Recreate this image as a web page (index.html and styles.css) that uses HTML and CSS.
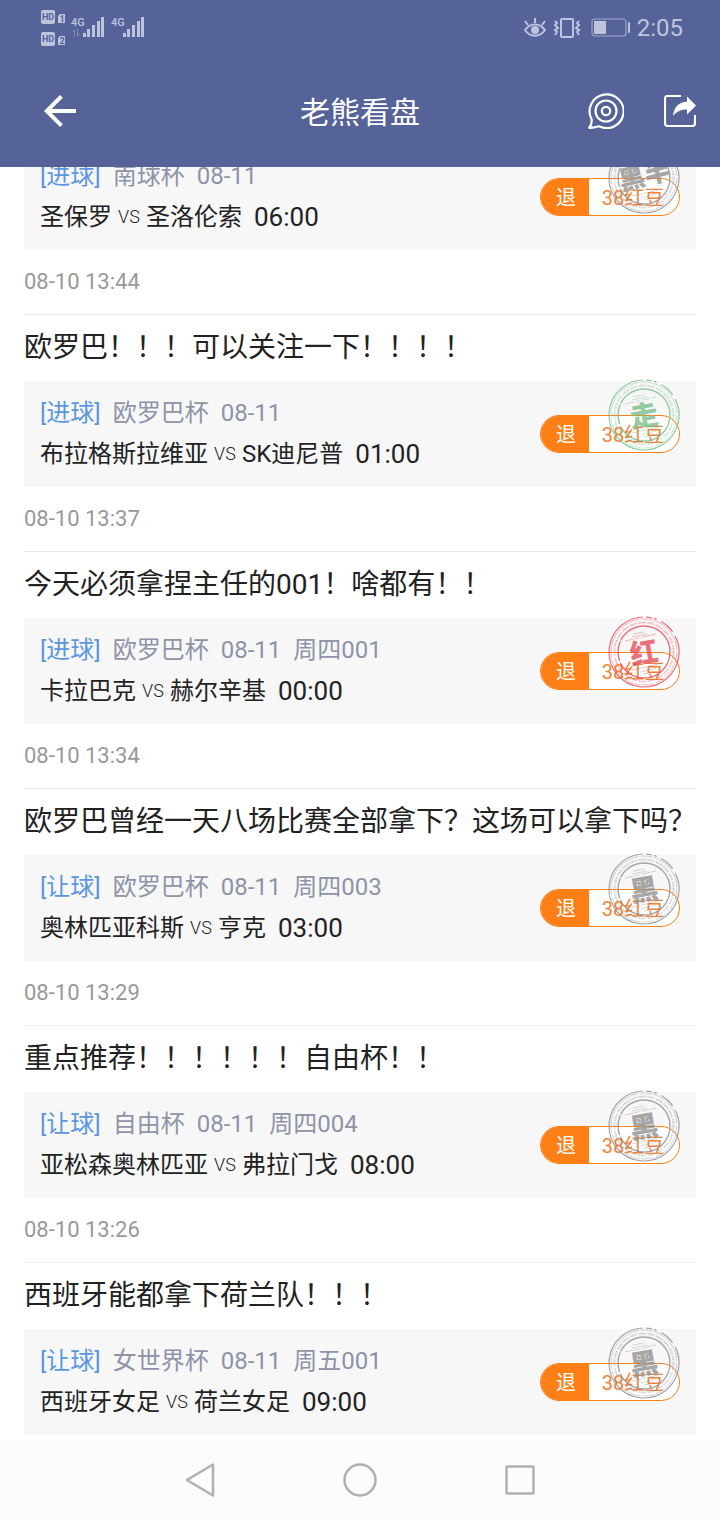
FILE: index.html
```html
<!DOCTYPE html>
<html lang="zh-CN">
<head>
  <meta charset="UTF-8" />
  <meta name="viewport" content="width=device-width, initial-scale=1.0" />
  <title>老熊看盘</title>
  <link rel="stylesheet" href="styles.css">
</head>
<body>

  <!-- Shared stamp ring -->
  <svg class="sprite" width="0" height="0" aria-hidden="true">
    <symbol id="ring" viewBox="0 0 72 72">
      <g fill="none" stroke="currentColor">
        <circle cx="36" cy="36" r="35" stroke-width="1.2" stroke-dasharray="3 5 30 0 150 3 6 2" transform="rotate(-40 36 36)"/>
        <circle cx="36" cy="36" r="33" stroke-width="0.5" stroke-dasharray="40 2 12 1"/>
        <circle cx="36" cy="36" r="29.5" stroke-width="1.8" stroke-dasharray="1 0.6 0.7 0.5 1.2 0.8 0.6 0.5 1 2" opacity="0.6"/>
        <circle cx="36" cy="36" r="26" stroke-width="1.4" stroke-dasharray="70 2 20 1"/>
        <path d="M17 25L48 18M24 54L55 47" stroke-width="0.5" stroke-dasharray="9 1 5 2"/>
        <path d="M25 18L36 16M24 21L39 18M33 56L48 52M36 58L46 56" stroke-width="1" stroke-dasharray="1 0.6 2 0.6" opacity="0.6"/>
      </g>
    </symbol>
  </svg>

  <header>
    <!-- Status bar -->
    <div class="status-bar">
      <svg class="signals" width="106" height="40" viewBox="0 0 106 40" fill="currentColor">
        <rect x="1" y="2" width="14" height="14" rx="2"/>
        <rect x="1" y="24" width="14" height="14" rx="2"/>
        <path d="M20 6h5v9h-7V8zM20 28h5v9h-7v-7z"/>
        <g class="badge-text" text-anchor="middle">
          <text x="8" y="12">HD</text>
          <text x="8" y="34">HD</text>
          <text x="22" y="14">1</text>
          <text x="22" y="36">2</text>
        </g>
        <g class="net-text">
          <text x="31" y="18">4G</text>
          <text x="71" y="18">4G</text>
        </g>
        <path opacity="0.4" d="M32 24l3-3v8h-1v-5zM37 21h1v5h2l-3 3z"/>
        <path d="M43 25h3v4h-3zM47 21h3v8h-3zM52 17h3v12h-3zM57 13h3v16h-3zM61 9h3v20h-3z"/>
        <path d="M83 25h3v4h-3zM87 21h3v8h-3zM92 17h3v12h-3zM97 13h3v16h-3zM101 9h3v20h-3z"/>
      </svg>
      <div class="status-right">
        <svg width="24" height="22" viewBox="0 0 24 22" fill="none" stroke="currentColor" stroke-width="2">
          <path d="M2 13C7 5.500 17 5.500 22 13C17 20.500 7 20.500 2 13zM12 6V1M5 8L2 4M19 8l3-4"/>
          <circle cx="12" cy="13" r="4" fill="currentColor" stroke="none"/>
        </svg>
        <svg width="28" height="22" viewBox="0 0 28 22" fill="none" stroke="currentColor" stroke-width="2">
          <rect x="8" y="2" width="12" height="18" rx="1"/>
          <path d="M2 4l2 2-2 2 3 3-3 2 2 2-2 3M26 4l-2 2 2 2-3 3 3 2-2 2 2 3"/>
        </svg>
        <svg class="battery" width="40" height="20" viewBox="0 0 40 20" fill="currentColor">
          <rect x="1" y="1" width="34" height="17" rx="3" fill="none" stroke="currentColor" stroke-width="1.200" opacity="0.7"/>
          <rect x="3" y="3" width="12" height="13"/>
          <rect x="37" y="4" width="2" height="11" rx="1"/>
        </svg>
        <span class="clock">2:05</span>
      </div>
    </div>

    <!-- App bar -->
    <div class="app-bar">
      <button class="icon-btn back-btn" aria-label="返回">
        <svg width="32" height="32" viewBox="4 4 16 16" fill="currentColor"><path d="M20 11H7.830l5.590-5.590L12 4l-8 8 8 8 1.410-1.410L7.830 13H20v-2z"/></svg>
      </button>
      <h1>老熊看盘</h1>
      <div class="actions">
        <button class="icon-btn" aria-label="消息">
          <svg width="36" height="36" viewBox="0 0 36 36" fill="none" stroke="currentColor" stroke-width="2.200">
            <path d="M3.500 26A17 16.800 0 1 1 11 33.300C7 34.500 4 35 1.200 34.800C3 32.500 4.300 30 3.500 26z" stroke-linejoin="round"/>
            <circle cx="18" cy="18" r="10.500"/>
            <circle cx="18" cy="18" r="4.200"/>
          </svg>
        </button>
        <button class="icon-btn" aria-label="分享">
          <svg width="32" height="32" viewBox="1 1 32 32" fill="none" stroke="currentColor" stroke-width="2.200">
            <path d="M18 2H4.500A2.500 2.500 0 0 0 2 4.500v25A2.500 2.500 0 0 0 4.500 32h25a2.500 2.500 0 0 0 2.500-2.500V21"/>
            <path d="M24 2.500L33 11.500L24 20.500V15.500C18 15.500 14 17 10 22C11 13 16 8 24 7.500z" fill="currentColor" stroke="none"/>
          </svg>
        </button>
      </div>
    </div>
  </header>

  <!-- Feed, scrolled part way down -->
  <main>
    <article class="post">
      <div class="card">
        <p class="league"><a href="#">[进球]</a><span>南球杯</span><span>08-11</span></p>
        <p class="match"><span>圣保罗</span><span class="vs">VS</span><span>圣洛伦索</span><time>06:00</time></p>
        <button class="price"><span class="refund">退</span><span class="beans">38红豆</span></button>
        <svg class="stamp gray half" viewBox="0 0 72 72"><use href="#ring"/><text x="37" y="43" text-anchor="middle" transform="rotate(-14 36 36)">黑半</text></svg>
      </div>
      <p class="posted">08-10 13:44</p>
    </article>

    <article class="post">
      <h2>欧罗巴！！！可以关注一下！！！！</h2>
      <div class="card">
        <p class="league"><a href="#">[进球]</a><span>欧罗巴杯</span><span>08-11</span></p>
        <p class="match"><span>布拉格斯拉维亚</span><span class="vs">VS</span><span>SK迪尼普</span><time>01:00</time></p>
        <button class="price"><span class="refund">退</span><span class="beans">38红豆</span></button>
        <svg class="stamp green" viewBox="0 0 72 72"><use href="#ring"/><text x="36" y="47" text-anchor="middle" transform="rotate(-10 36 36)">走</text></svg>
      </div>
      <p class="posted">08-10 13:37</p>
    </article>

    <article class="post">
      <h2>今天必须拿捏主任的001！啥都有！！</h2>
      <div class="card">
        <p class="league"><a href="#">[进球]</a><span>欧罗巴杯</span><span>08-11</span><span>周四001</span></p>
        <p class="match"><span>卡拉巴克</span><span class="vs">VS</span><span>赫尔辛基</span><time>00:00</time></p>
        <button class="price"><span class="refund">退</span><span class="beans">38红豆</span></button>
        <svg class="stamp red" viewBox="0 0 72 72"><use href="#ring"/><text x="36" y="47" text-anchor="middle" transform="rotate(-10 36 36)">红</text></svg>
      </div>
      <p class="posted">08-10 13:34</p>
    </article>

    <article class="post">
      <h2>欧罗巴曾经一天八场比赛全部拿下？这场可以拿下吗？</h2>
      <div class="card">
        <p class="league"><a href="#">[让球]</a><span>欧罗巴杯</span><span>08-11</span><span>周四003</span></p>
        <p class="match"><span>奥林匹亚科斯</span><span class="vs">VS</span><span>亨克</span><time>03:00</time></p>
        <button class="price"><span class="refund">退</span><span class="beans">38红豆</span></button>
        <svg class="stamp gray" viewBox="0 0 72 72"><use href="#ring"/><text x="36" y="47" text-anchor="middle" transform="rotate(-10 36 36)">黑</text></svg>
      </div>
      <p class="posted">08-10 13:29</p>
    </article>

    <article class="post">
      <h2>重点推荐！！！！！！自由杯！！</h2>
      <div class="card">
        <p class="league"><a href="#">[让球]</a><span>自由杯</span><span>08-11</span><span>周四004</span></p>
        <p class="match"><span>亚松森奥林匹亚</span><span class="vs">VS</span><span>弗拉门戈</span><time>08:00</time></p>
        <button class="price"><span class="refund">退</span><span class="beans">38红豆</span></button>
        <svg class="stamp gray" viewBox="0 0 72 72"><use href="#ring"/><text x="36" y="47" text-anchor="middle" transform="rotate(-10 36 36)">黑</text></svg>
      </div>
      <p class="posted">08-10 13:26</p>
    </article>

    <article class="post">
      <h2>西班牙能都拿下荷兰队！！！</h2>
      <div class="card">
        <p class="league"><a href="#">[让球]</a><span>女世界杯</span><span>08-11</span><span>周五001</span></p>
        <p class="match"><span>西班牙女足</span><span class="vs">VS</span><span>荷兰女足</span><time>09:00</time></p>
        <button class="price"><span class="refund">退</span><span class="beans">38红豆</span></button>
        <svg class="stamp gray" viewBox="0 0 72 72"><use href="#ring"/><text x="36" y="47" text-anchor="middle" transform="rotate(-10 36 36)">黑</text></svg>
      </div>
    </article>
  </main>

  <!-- System navigation -->
  <nav>
    <button aria-label="后退">
      <svg width="36" height="36" viewBox="0 0 36 36"><path d="M31 2.500V33.500L5 18z"/></svg>
    </button>
    <button aria-label="主页">
      <svg width="36" height="36" viewBox="0 0 36 36"><circle cx="18" cy="18" r="15.500"/></svg>
    </button>
    <button aria-label="最近任务">
      <svg width="36" height="36" viewBox="0 0 36 36"><rect x="4.500" y="4.500" width="27" height="27" rx="1"/></svg>
    </button>
  </nav>

</body>
</html>
```
FILE: styles.css
```css
* {
  box-sizing: border-box;
}

body {
  font-family: Roboto, 'Noto Sans CJK SC', sans-serif;
  background-color: #ffffff;
  color: #222222;
  margin: 0;
  height: 100vh;
  display: flex;
  flex-direction: column;
}

h1, h2, p {
  margin: 0;
  font-weight: 400;
}

button {
  font: inherit;
  padding: 0;
  border: none;
  background: none;
  cursor: pointer;
}

svg {
  display: block;
}

.sprite {
  position: absolute;
}

/* Header */
header {
  flex: none;
  position: relative;
  z-index: 1;
  background-color: #556399;
  color: #ffffff;
}

.status-bar {
  display: flex;
  justify-content: space-between;
  align-items: center;
  height: 56px;
  padding: 0 37px 0 40px;
  color: #bec4de;
}

.badge-text {
  fill: #556399;
  font-size: 9px;
  font-weight: 700;
}

.net-text {
  font-size: 11px;
  font-weight: 500;
}

.status-right {
  display: flex;
  align-items: center;
  gap: 6px;
}

.battery {
  margin-left: 4px;
}

.clock {
  font-size: 24px;
  line-height: 28px;
}

.app-bar {
  display: grid;
  grid-template-columns: 1fr auto 1fr;
  align-items: center;
  height: 111px;
  padding: 0 24px 2px;
}

.app-bar h1 {
  font-size: 30px;
  line-height: 40px;
  padding-top: 4px;
}

.icon-btn {
  color: #ffffff;
}

.back-btn {
  justify-self: start;
  margin-left: 20px;
}

.actions {
  display: flex;
  align-items: center;
  justify-content: flex-end;
  gap: 40px;
}

/* Feed */
main {
  flex: 1;
  min-height: 0;
  display: flex;
  flex-direction: column;
  justify-content: flex-end;
  overflow: hidden;
  padding: 0 24px 5px;
}

.post {
  flex: none;
}

.post + .post {
  border-top: 1px solid #ebebeb;
}

.post h2 {
  font-size: 28px;
  line-height: 66px;
  white-space: nowrap;
}

.card {
  position: relative;
  height: 106px;
  padding: 12px 16px;
  background-color: #f7f7f8;
}

.league, .match {
  display: flex;
  font-size: 24px;
  white-space: nowrap;
}

.league {
  gap: 12px;
  line-height: 40px;
  color: #8e93a8;
}

.league a {
  color: #5b96e0;
  text-decoration: none;
}

.match {
  line-height: 42px;
}

.vs {
  width: 34px;
  font-size: 18px;
  font-weight: 300;
  text-align: center;
}

.match time {
  margin-left: 12px;
  font-size: 26px;
}

.posted {
  font-size: 22px;
  line-height: 64px;
  color: #999999;
}

.price {
  position: absolute;
  top: 34px;
  right: 16px;
  display: flex;
  width: 140px;
  height: 38px;
  border: 1px solid #ff7f17;
  border-radius: 19px;
  overflow: hidden;
  background-color: #ffffff;
  font-size: 20px;
  line-height: 38px;
}

.refund {
  width: 48px;
  padding-left: 2px;
  background-color: #ff7f17;
  color: #ffffff;
}

.beans {
  flex: 1;
  padding-right: 2px;
  color: #f08437;
}

/* Result stamps */
.stamp {
  position: absolute;
  top: -2px;
  right: 16px;
  width: 72px;
  height: 72px;
  opacity: 0.8;
  pointer-events: none;
}

.stamp text {
  font-size: 28px;
  font-weight: 900;
  fill: currentColor;
}

.stamp.half text {
  font-size: 26px;
}

.gray {
  color: #929292;
}

.green {
  color: #7cc08a;
}

.red {
  color: #e8505c;
}

/* System navigation */
nav {
  flex: none;
  display: flex;
  justify-content: center;
  height: 80px;
  background-color: #fcfcfc;
}

nav button {
  display: flex;
  align-items: center;
  justify-content: center;
  width: 160px;
}

nav svg {
  fill: none;
  stroke: #b0b0b0;
  stroke-width: 2.5;
  stroke-linejoin: round;
}
```
